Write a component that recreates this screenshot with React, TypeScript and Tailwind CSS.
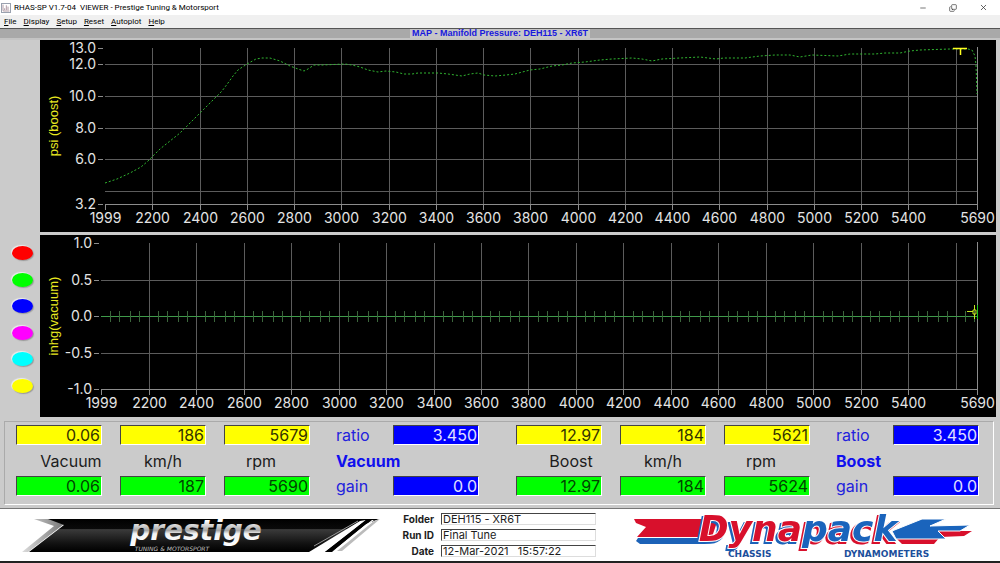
import { BarChart3, Copy, Minus, X } from "lucide-react";

const menus = ["File", "Display", "Setup", "Reset", "Autoplot", "Help"];

const channels = [
  { name: "Red", color: "bg-[#ff0000]" },
  { name: "Green", color: "bg-[#00ff00]" },
  { name: "Blue", color: "bg-[#0000ff]" },
  { name: "Magenta", color: "bg-[#ff00ff]" },
  { name: "Cyan", color: "bg-[#00ffff]" },
  { name: "Yellow", color: "bg-[#ffff00]" },
];

const boostCurve =
  "65,143 77,139 90,133 101,127 108,121 112,117 120,109 130,101 140,93 150,83 160,73 170,63 177,56 182,51 188,43 193,36 198,30 207,24 216,19 222,18 230,18 240,21 250,26 258,29 264,31 268,29 274,25 282,25 305,24 312,25 320,27 328,30 338,32 346,31 356,32 364,34 372,34 378,33 398,33 408,34 415,35 422,36 430,34 438,33 444,35 455,36 466,35 475,34 490,30 500,29 512,26 522,25 532,23 545,22 560,20 572,19 592,18 602,19 612,21 622,19 640,18 660,17 676,19 684,18 705,18 720,16 735,15 750,15 760,17 772,15 798,16 810,14 835,14 845,13 860,13 870,11 880,10 910,9 928,9 932,10 935,16 936,25 937,54";

const MIN_RPM = 1999;
const MAX_RPM = 5690;
const gridRpm = Array.from({ length: 18 }, (_, i) => 2200 + i * 200);

type ChartProps = {
  title: string;
  height: number;
  left: number;
  bottom: number;
  min: number;
  max: number;
  gridValues: number[];
  labelValues: number[];
  children: React.ReactNode;
};

function Chart({
  title,
  height,
  left,
  bottom,
  min,
  max,
  gridValues,
  labelValues,
  children,
}: ChartProps) {
  const top = 8;
  const right = 937;
  const x = (rpm: number) =>
    Math.round(left + ((rpm - MIN_RPM) / (MAX_RPM - MIN_RPM)) * (right - left)) + 0.5;
  const y = (v: number) =>
    Math.round(bottom - ((v - min) / (max - min)) * (bottom - top)) + 0.5;
  const ticks = [MIN_RPM, ...gridRpm.filter((r) => r < 5600), MAX_RPM];

  return (
    <svg
      viewBox={`0 0 956 ${height}`}
      className="block h-auto w-full bg-black font-['Inter',sans-serif] text-sm"
      role="img"
      aria-label={title}
    >
      <g stroke="#5c5c5c" strokeWidth="1">
        {gridRpm.map((r) => (
          <line key={r} x1={x(r)} x2={x(r)} y1={top} y2={bottom} />
        ))}
        {gridValues.map((v) => (
          <line key={v} x1={left} x2={right} y1={y(v)} y2={y(v)} />
        ))}
      </g>
      <g stroke="#8c8c8c" strokeWidth="1">
        <line x1={left} x2={right} y1={y(min)} y2={y(min)} />
        <line x1={x(MAX_RPM)} x2={x(MAX_RPM)} y1={top - 1} y2={bottom} />
        {ticks.map((r) => (
          <line key={r} x1={x(r)} x2={x(r)} y1={bottom} y2={bottom + 6} />
        ))}
        {labelValues.map((v) => (
          <line key={v} x1={left - 7} x2={left - 2} y1={y(v)} y2={y(v)} />
        ))}
      </g>
      <g fill="#e4e4e4" textAnchor="middle">
        {ticks.map((r) => (
          <text key={r} x={x(r)} y={bottom + 19}>
            {r}
          </text>
        ))}
      </g>
      <g fill="#e4e4e4" textAnchor="end">
        {labelValues.map((v) => (
          <text key={v} x={left - 9} y={y(v) + 4.5}>
            {v.toFixed(1)}
          </text>
        ))}
      </g>
      <text
        transform={`translate(18 ${top + (bottom - top) / 2}) rotate(-90)`}
        textAnchor="middle"
        fill="#e8e820"
        className="font-['Liberation_Sans',sans-serif] text-[13px]"
      >
        {title}
      </text>
      {children}
    </svg>
  );
}

function BoostChart() {
  return (
    <Chart
      title="psi (boost)"
      height={192}
      left={65}
      bottom={164}
      min={3.2}
      max={13}
      gridValues={[4, 6, 8, 10, 12]}
      labelValues={[3.2, 6, 8, 10, 12, 13]}
    >
      <polyline
        points={boostCurve}
        fill="none"
        stroke="#30b430"
        strokeWidth="1"
        strokeDasharray="2 2"
      />
      <path d="M913 8.5H927M920.5 8V15" stroke="#ffff20" strokeWidth="1.5" fill="none" />
    </Chart>
  );
}

function VacuumChart() {
  // four sample marks between each pair of grid lines
  const marks: number[] = [];
  for (let i = 0; i <= 18; i++) {
    [9, 18, 29, 38].forEach((d) => {
      const pos = Math.round(61 + i * 47.5 + d);
      if (pos < 936) marks.push(pos + 0.5);
    });
  }
  return (
    <Chart
      title="inhg(vacuum)"
      height={182}
      left={61}
      bottom={154}
      min={-1}
      max={1}
      gridValues={[-0.5, 0, 0.5]}
      labelValues={[-1, -0.5, 0, 0.5, 1]}
    >
      <path d="M61 81.5H937" stroke="#3f9a4a" strokeWidth="1" />
      <g stroke="#3c663c" strokeWidth="1">
        {marks.map((m) => (
          <line key={m} x1={m} x2={m} y1="76" y2="87" />
        ))}
      </g>
      <path d="M927 76.5H933M934.5 70V75M934.5 79V84M933 75h3v4h-3z" stroke="#c8e820" fill="none" />
      <path d="M937.5 70V84" stroke="#20c820" />
    </Chart>
  );
}

type ReadoutProps = { id: string; label?: string; value: string; color: string };

function Readout({ id, label, value, color }: ReadoutProps) {
  return (
    <input
      id={id}
      readOnly
      aria-label={label}
      value={value}
      className={`h-5 w-full min-w-0 border border-t-[#444] border-l-[#444] border-r-white border-b-white pr-px text-right leading-4 outline-none ${color}`}
    />
  );
}

const yellow = "bg-[#ffff00] text-[#333300]";
const green = "bg-[#00ff00] text-[#004400]";
const blue = "bg-[#0000ff] text-[#e0e0ff]";

type GroupProps = { name: string; live: string[]; peak: string[] };

function ReadoutGroup({ name, live, peak }: GroupProps) {
  const units = [name, "km/h", "rpm"];
  return (
    <div className="grid grid-cols-[86fr_86fr_86fr_47fr_86fr] grid-rows-[20px_31px_20px] items-center gap-x-[18px]">
      {units.map((u, i) => (
        <Readout
          key={u}
          id={`${name}-${u}-1`}
          label={`${u} cursor 1`}
          value={live[i]}
          color={yellow}
        />
      ))}
      <label htmlFor={`${name}-ratio`} className="pl-2 text-[#2222dd]">
        ratio
      </label>
      <Readout id={`${name}-ratio`} value="3.450" color={blue} />

      <span className="pl-6 text-center whitespace-nowrap">{name}</span>
      <span className="text-center">km/h</span>
      <span className="pr-3 text-center">rpm</span>
      <span className="col-span-2 pl-2 font-bold text-[#1010ee]">{name}</span>

      {units.map((u, i) => (
        <Readout
          key={u}
          id={`${name}-${u}-2`}
          label={`${u} cursor 2`}
          value={peak[i]}
          color={green}
        />
      ))}
      <label htmlFor={`${name}-gain`} className="pl-2 text-[#2222dd]">
        gain
      </label>
      <Readout id={`${name}-gain`} value="0.0" color={blue} />
    </div>
  );
}

function PrestigeLogo() {
  return (
    <svg
      viewBox="0 0 358 36"
      className="h-auto w-full overflow-visible"
      role="img"
      aria-label="Prestige"
    >
      <defs>
        <linearGradient id="banner" x1="0" y1="0" x2="0" y2="1">
          <stop offset="0" stopColor="#000" />
          <stop offset="0.3" stopColor="#0a0a0a" />
          <stop offset="0.32" stopColor="#3a3a3a" />
          <stop offset="0.75" stopColor="#111" />
          <stop offset="1" stopColor="#000" />
        </linearGradient>
        <linearGradient id="chrome" x1="0" y1="0" x2="0" y2="1">
          <stop offset="0.2" stopColor="#ffffff" />
          <stop offset="0.5" stopColor="#a8a8a8" />
          <stop offset="0.6" stopColor="#f4f4f4" />
          <stop offset="1" stopColor="#ffffff" />
        </linearGradient>
        <linearGradient id="fade" x1="0" y1="0" x2="1" y2="0">
          <stop offset="0" stopColor="#ddd" />
          <stop offset="1" stopColor="#777" />
        </linearGradient>
      </defs>
      <path d="M12 2L28 2L42 7L6 35L0 35L32 9Z" fill="url(#fade)" />
      <path d="M26 2H357L344 7L310 35H7L42 8Z" fill="url(#banner)" />
      <path d="M287 35L338 4L344 3L303 35Z" fill="#fff" />
      <path d="M303 35L344 3L349 3L309 35Z" fill="#000" />
      <path d="M310 35L350 3L352 3L316 31Z" fill="#fff" />
      <path d="M315 34L352 4L358 2L320 34Z" fill="#bbb" />
      <path d="M292 29L336 4" stroke="#999" strokeWidth="1" />
      <text
        x="174"
        y="23"
        textAnchor="middle"
        fill="url(#chrome)"
        className="font-['DejaVu_Sans',sans-serif] text-[28px] font-bold italic"
      >
        prestige
      </text>
      <text
        x="150"
        y="34"
        textAnchor="middle"
        fill="#c0c0c0"
        className="font-['DejaVu_Sans',sans-serif] text-[6px] italic"
      >
        TUNING &amp; MOTORSPORT
      </text>
    </svg>
  );
}

function DynapackLogo() {
  return (
    <svg
      viewBox="0 0 338 44"
      className="h-auto w-full overflow-visible"
      role="img"
      aria-label="Dynapack"
    >
      {/* ribbon running in from the left */}
      <path d="M4 25H78L70 31H6L2 28Z" fill="#1c62b8" />
      <path d="M0 6H84L78 24H3L12 14L2 10Z" fill="#d8102c" />
      <path d="M4 24.500H78" stroke="#fff" strokeWidth="1" />
      {/* tail of the k */}
      <path d="M262 25L286 17L316 18H338L330 23L306 24L300 31H268Z" fill="#d8102c" />
      <path
        d="M258 18L288 6H312L296 13L336 12L326 18H304L312 26H262Z"
        fill="#1a64bc"
        stroke="#fff"
        strokeWidth="1"
      />
      <g
        stroke="#fff"
        strokeWidth="2"
        paintOrder="stroke"
        className="font-['DejaVu_Sans',sans-serif] text-[36px] font-bold italic"
      >
        <text
          x="168"
          y="28"
          textAnchor="end"
          fill="#d8102c"
          className="drop-shadow-[-2px_2px_0_#1c62b8]"
        >
          Dyna
        </text>
        <text x="168" y="28" fill="#1a64bc" className="drop-shadow-[-2px_2px_0_#d8102c]">
          pack
        </text>
      </g>
      <g
        fill="#1c4f9c"
        className="font-['DejaVu_Sans',sans-serif] text-[9px] font-bold"
      >
        <text x="94" y="44">
          CHASSIS
        </text>
        <text x="210" y="44">
          DYNAMOMETERS
        </text>
      </g>
    </svg>
  );
}

const runInfo = [
  { id: "folder", label: "Folder", value: "DEH115 - XR6T" },
  { id: "run-id", label: "Run ID", value: "Final Tune" },
  { id: "date", label: "Date", value: "12-Mar-2021   15:57:22" },
];

export default function App() {
  return (
    <div className="w-full overflow-hidden bg-[#cbcbcb] font-['Inter',sans-serif] text-base text-[#1c1c1c]">
      {/* Title bar */}
      <header className="flex h-[15px] items-center justify-between bg-white pr-3 pl-px font-['Roboto',sans-serif] text-[8px] leading-none text-black">
        <div className="flex items-center gap-[3px]">
          <BarChart3 size={10} className="border border-gray-400 text-[#886677]" />
          <h1 className="whitespace-pre">
            RHAS-SP V1.7-04  VIEWER - Prestige Tuning &amp; Motorsport
          </h1>
        </div>
        <div className="flex items-center gap-[22px] text-[#333]">
          <button aria-label="Minimize">
            <Minus size={8} />
          </button>
          <button aria-label="Restore">
            <Copy size={8} className="-scale-x-100 rotate-180" />
          </button>
          <button aria-label="Close">
            <X size={9} />
          </button>
        </div>
      </header>

      {/* Menu */}
      <nav className="flex h-[13px] items-center gap-[7px] bg-[#f0f0f0] pl-1 font-['Roboto',sans-serif] text-[8px] leading-none text-black">
        {menus.map((m) => (
          <button key={m}>
            <span className="underline">{m[0]}</span>
            {m.slice(1)}
          </button>
        ))}
      </nav>

      <div className="flex h-3 items-start justify-center border-t border-[#555] border-b-2 border-b-[#c4c4c4] bg-[#a9a9a9]">
        <h2 className="bg-[#c6c6c6] px-0.5 font-['Liberation_Sans',sans-serif] text-[9px] leading-[9px] font-bold text-[#1818dd]">
          MAP - Manifold Pressure: DEH115 - XR6T
        </h2>
      </div>

      {/* Charts */}
      <main className="flex pr-1">
        <aside className="flex w-10 shrink-0 flex-col justify-end pb-6">
          <div className="flex h-[147px] flex-col items-center justify-between pl-1">
            {channels.map((c) => (
              <button
                key={c.name}
                aria-label={c.name}
                className={`h-3.5 w-[21px] rounded-[50%] shadow-[-1px_-1px_1px_#eee,1px_1px_1px_#999] ${c.color}`}
              />
            ))}
          </div>
        </aside>
        <div className="flex min-w-0 flex-1 flex-col gap-[3px]">
          <BoostChart />
          <VacuumChart />
        </div>
      </main>

      {/* Readouts */}
      <section className="pt-1 pr-1.5 pb-[3px] pl-1">
        <div className="grid grid-cols-2 gap-x-[37px] border border-[#aaa] border-r-white border-b-white pt-[3px] pr-[14px] pb-2 pl-[11px]">
          <ReadoutGroup
            name="Vacuum"
            live={["0.06", "186", "5679"]}
            peak={["0.06", "187", "5690"]}
          />
          <ReadoutGroup
            name="Boost"
            live={["12.97", "184", "5621"]}
            peak={["12.97", "184", "5624"]}
          />
        </div>
      </section>

      {/* Footer */}
      <footer className="grid grid-cols-[358fr_226fr_338fr] items-center gap-x-3.5 border-t border-b-2 border-t-[#777] border-b-[#222] bg-white py-1 pr-7 pl-[22px] leading-none">
        <PrestigeLogo />
        <div className="grid grid-cols-[40px_1fr] items-center gap-x-[7px] gap-y-1 pr-6">
          {runInfo.map((f) => (
            <div key={f.id} className="contents">
              <label htmlFor={f.id} className="text-right text-[10px] font-bold">
                {f.label}
              </label>
              <input
                id={f.id}
                readOnly
                value={f.value}
                className="h-3 w-full min-w-0 border border-t-[#444] border-r-[#ddd] border-b-[#ddd] border-l-[#444] bg-white pl-px text-[11px] leading-none outline-none"
              />
            </div>
          ))}
        </div>
        <DynapackLogo />
      </footer>
    </div>
  );
}
